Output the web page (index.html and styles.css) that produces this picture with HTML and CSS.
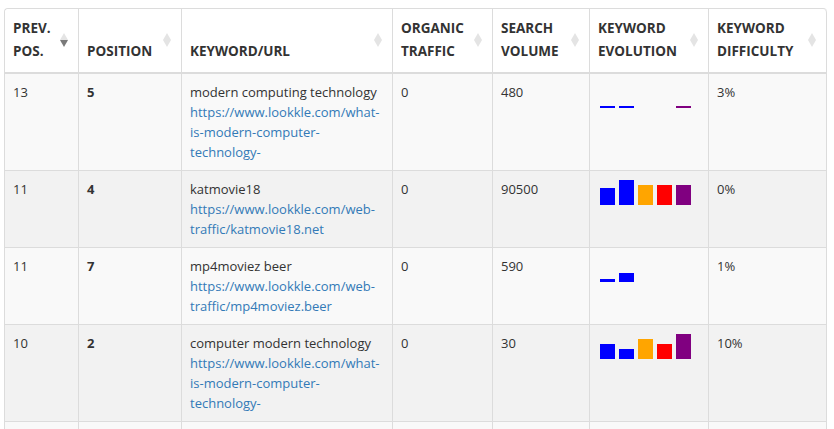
FILE: index.html
```html
<!DOCTYPE html>
<html>
<head>
<meta charset="utf-8">
<link rel="stylesheet" href="styles.css">
</head>
<body>
<div class="wrap">
<table class="kw">
<colgroup>
<col class="c1"><col class="c2"><col class="c3"><col class="c4"><col class="c5"><col class="c6"><col class="c7">
</colgroup>
<thead>
<tr>
<th class="sorted">PREV.<br>POS.<span class="sort"><i class="up"></i><i class="down"></i></span></th>
<th>POSITION<span class="sort"><i class="up"></i><i class="down"></i></span></th>
<th>KEYWORD/URL<span class="sort"><i class="up"></i><i class="down"></i></span></th>
<th>ORGANIC<br>TRAFFIC<span class="sort"><i class="up"></i><i class="down"></i></span></th>
<th>SEARCH<br>VOLUME<span class="sort"><i class="up"></i><i class="down"></i></span></th>
<th>KEYWORD<br>EVOLUTION<span class="sort"><i class="up"></i><i class="down"></i></span></th>
<th>KEYWORD<br>DIFFICULTY<span class="sort"><i class="up"></i><i class="down"></i></span></th>
</tr>
</thead>
<tbody>
<tr class="odd">
<td>13</td>
<td><b>5</b></td>
<td>modern computing technology<br><a href="#">https://www.lookkle.com/what-is-modern-computer-technology-</a></td>
<td>0</td>
<td>480</td>
<td><div class="chart"><span class="bar blue" style="height:2px"></span><span class="bar blue" style="height:2px"></span><span class="bar orange" style="height:0"></span><span class="bar red" style="height:0"></span><span class="bar purple" style="height:2px"></span></div></td>
<td>3%</td>
</tr>
<tr class="even">
<td>11</td>
<td><b>4</b></td>
<td>katmovie18<br><a href="#">https://www.lookkle.com/web-traffic/katmovie18.net</a></td>
<td>0</td>
<td>90500</td>
<td><div class="chart"><span class="bar blue" style="height:17px"></span><span class="bar blue" style="height:25px"></span><span class="bar orange" style="height:20px"></span><span class="bar red" style="height:20px"></span><span class="bar purple" style="height:20px"></span></div></td>
<td>0%</td>
</tr>
<tr class="odd">
<td>11</td>
<td><b>7</b></td>
<td>mp4moviez beer<br><a href="#">https://www.lookkle.com/web-traffic/mp4moviez.beer</a></td>
<td>0</td>
<td>590</td>
<td><div class="chart"><span class="bar blue" style="height:3px"></span><span class="bar blue" style="height:9px"></span><span class="bar orange" style="height:0"></span><span class="bar red" style="height:0"></span><span class="bar purple" style="height:0"></span></div></td>
<td>1%</td>
</tr>
<tr class="even">
<td>10</td>
<td><b>2</b></td>
<td>computer modern technology<br><a href="#">https://www.lookkle.com/what-is-modern-computer-technology-</a></td>
<td>0</td>
<td>30</td>
<td><div class="chart"><span class="bar blue" style="height:15px"></span><span class="bar blue" style="height:10px"></span><span class="bar orange" style="height:20px"></span><span class="bar red" style="height:15px"></span><span class="bar purple" style="height:25px"></span></div></td>
<td>10%</td>
</tr>
<tr class="odd">
<td></td>
<td></td>
<td></td>
<td></td>
<td></td>
<td></td>
<td></td>
</tr>
</tbody>
</table>
</div>
</body>
</html>
```
FILE: styles.css
```css
html, body {
  margin: 0;
  padding: 0;
  background: #fff;
}
body {
  font-family: "Open Sans", "Noto Sans", sans-serif;
  color: #333;
  font-size: 13px;
}
.wrap {
  padding: 8px 8px 0 4px;
  height: 421px;
  overflow: hidden;
}
.kw {
  width: 822px;
  table-layout: fixed;
  border-collapse: separate;
  border-spacing: 0;
  border-top: 1px solid #dcdcdc;
  border-left: 1px solid #dcdcdc;
  border-radius: 4px 4px 0 0;
}
.c1 { width: 74px; }
.c2 { width: 103px; }
.c3 { width: 211px; }
.c4 { width: 100px; }
.c5 { width: 97px; }
.c6 { width: 119px; }
.c7 { width: 118px; }
th {
  position: relative;
  text-align: left;
  vertical-align: bottom;
  font-weight: 700;
  font-size: 13.5px;
  line-height: 23px;
  color: #333;
  padding: 8px 20px 9px 8px;
  border-right: 1px solid #dcdcdc;
  border-bottom: 2px solid #dcdcdc;
  background: #fff;
}
th:first-child { border-top-left-radius: 4px; }
th:last-child { border-top-right-radius: 4px; }
td {
  vertical-align: top;
  padding: 8px;
  line-height: 20px;
  border-right: 1px solid #dcdcdc;
  border-bottom: 1px solid #dcdcdc;
  word-wrap: break-word;
}
tr.odd td { background: #f9f9f9; }
tr.even td { background: #f2f2f2; }
tbody tr:last-child td { height: 40px; }
a {
  color: #337ab7;
  text-decoration: none;
}
.sort {
  position: absolute;
  right: 10px;
  top: 50%;
  margin-top: -8px;
  display: flex;
  flex-direction: column;
}
.sort i {
  display: block;
  width: 0;
  height: 0;
  border-left: 4.5px solid transparent;
  border-right: 4.5px solid transparent;
}
.sort .up { border-bottom: 7.5px solid #e4e4e4; }
.sort .down { border-top: 7.5px solid #e4e4e4; }
.sorted .sort .up { border-bottom-color: #e4e4e4; }
.sorted .sort .down { border-top-color: #7a7a7a; }
.chart {
  display: flex;
  align-items: flex-end;
  gap: 4px;
  height: 25px;
  margin-top: 1px;
  padding-left: 2px;
}
.bar {
  display: block;
  width: 15px;
}
.blue { background: #0000ff; }
.orange { background: #ffa500; }
.red { background: #ff0000; }
.purple { background: #800080; }
```
